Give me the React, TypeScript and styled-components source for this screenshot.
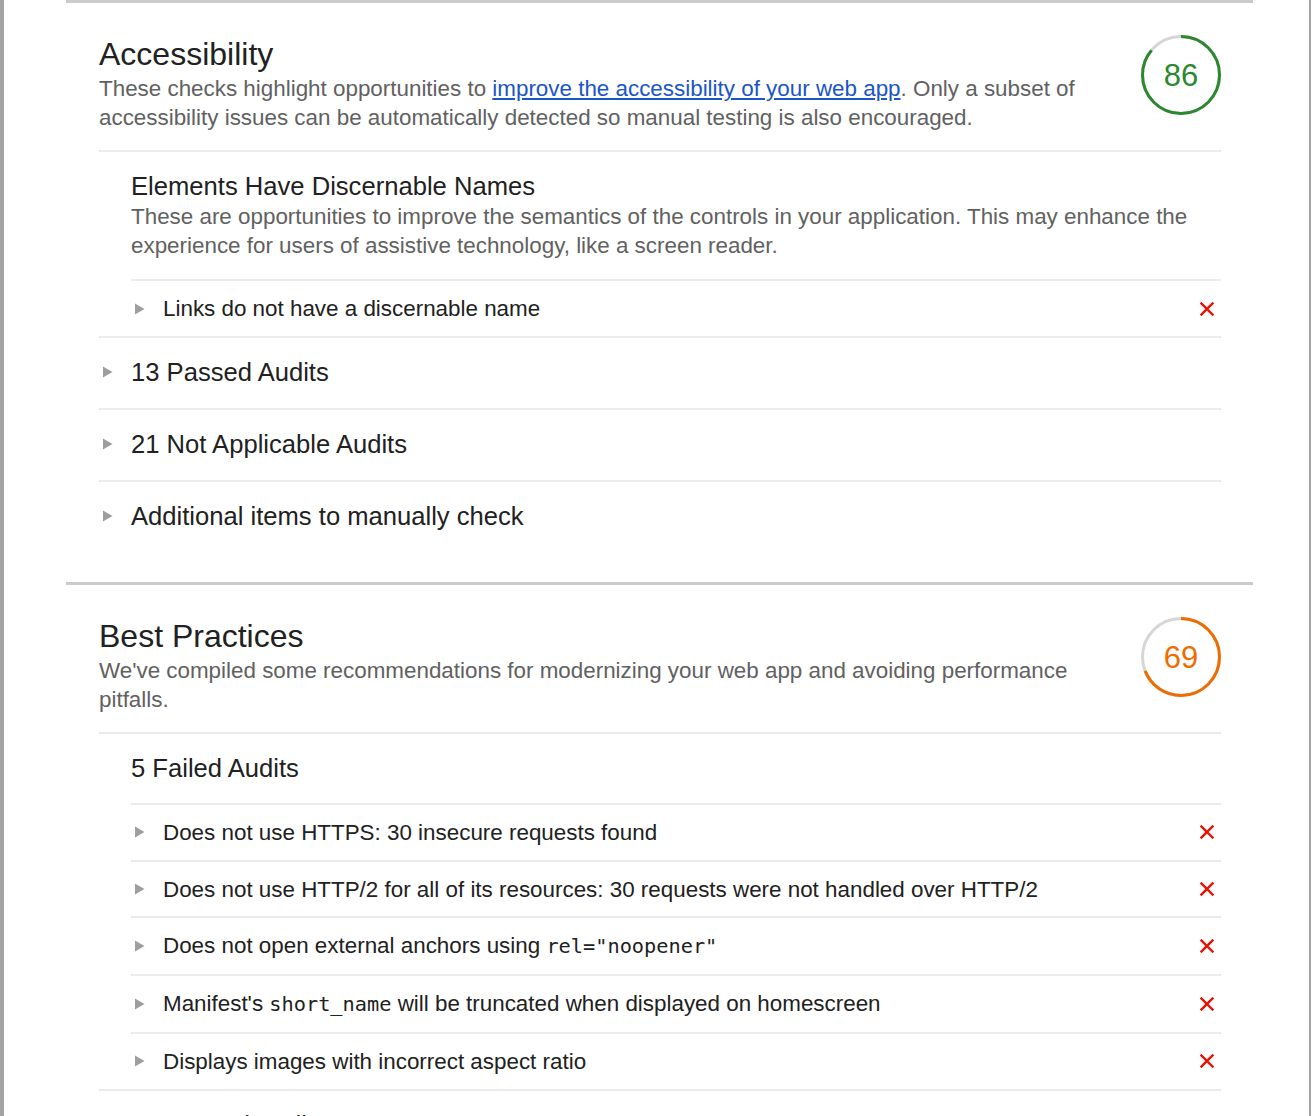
import React from "react";
import styled, { createGlobalStyle } from "styled-components";

const GlobalStyle = createGlobalStyle`
  html, body { margin: 0; padding: 0; background: #fff; }
  body {
    font-family: "Liberation Sans", Arial, Helvetica, sans-serif;
    color: #212121;
    -webkit-font-smoothing: antialiased;
  }
`;

const Frame = styled.div`
  box-sizing: border-box;
  width: 1311px;
  min-height: 1116px;
  border-left: 4px solid #a3a3a3;
  border-right: 2px solid #a3a3a3;
  overflow: hidden;
`;

const Column = styled.div`
  margin-left: 62px;
  width: 1187px;
`;

const Category = styled.section`
  border-top: 3px solid #cbcbcb;
  padding: 32px 32px 30px 33px;
`;

const Header = styled.header`
  display: flex;
  align-items: flex-start;
  padding-bottom: 18px;
`;

const HeaderText = styled.div`
  flex: 1;
  margin-right: 40px;
`;

const Title = styled.h2`
  margin: 0;
  font-size: 32px;
  line-height: 38px;
  font-weight: 400;
  color: #212121;
`;

const Description = styled.p`
  margin: 1px 0 0;
  font-size: 22.4px;
  line-height: 29px;
  color: #616161;
`;

const Link = styled.a`
  color: #1a55c9;
  text-decoration: underline;
`;

const GaugeWrap = styled.div<{ $color: string }>`
  position: relative;
  width: 80px;
  height: 80px;
  flex: none;
  color: ${(p) => p.$color};
`;

const GaugeValue = styled.div`
  position: absolute;
  inset: 0;
  display: flex;
  align-items: center;
  justify-content: center;
  font-size: 31px;
  line-height: 1;
  padding-top: 1px;
`;

const Group = styled.div`
  border-top: 2px solid #ebebeb;
`;

const GroupHeader = styled.div`
  padding: 18px 0 19px 32px;
`;

const GroupTitle = styled.div`
  font-size: 25.6px;
  line-height: 32px;
  color: #212121;
`;

const GroupDescription = styled.div`
  font-size: 22.4px;
  line-height: 29px;
  color: #616161;
`;

const AuditList = styled.div`
  margin-left: 32px;
`;

const AuditRow = styled.div`
  display: flex;
  align-items: center;
  border-top: 2px solid #ebebeb;
  padding: 13px 0 12.8px;
  font-size: 22.4px;
  line-height: 29px;
  color: #212121;
`;

const ArrowSlot = styled.span`
  width: 32px;
  flex: none;
  display: flex;
  align-items: center;
  padding-left: 4px;
  box-sizing: border-box;
`;

const AuditText = styled.span`
  flex: 1;
`;

const Code = styled.code`
  font-family: "DejaVu Sans Mono", "Liberation Mono", monospace;
  font-size: 20.3px;
`;

const FailMark = styled.span`
  flex: none;
  display: flex;
  margin-right: 7px;
`;

const ExpandRow = styled.div`
  display: flex;
  align-items: center;
  border-top: 2px solid #ebebeb;
  padding: 18px 0 20px;
  font-size: 25.6px;
  line-height: 32px;
  color: #212121;
`;

const Arrow = () => (
  <svg width="10" height="12" viewBox="0 0 10 12" aria-hidden>
    <polygon points="0,0.5 9.5,6 0,11.5" fill="#9e9e9e" />
  </svg>
);

const Cross = () => (
  <svg width="14" height="14" viewBox="0 0 14 14" aria-hidden>
    <path d="M1.5 1.5 L12.5 12.5 M12.5 1.5 L1.5 12.5" stroke="#eb0f00" strokeWidth="2.4" strokeLinecap="square" />
  </svg>
);

const Gauge = ({ value, color }: { value: number; color: string }) => {
  const r = 38.5;
  const c = 2 * Math.PI * r;
  return (
    <GaugeWrap $color={color}>
      <svg width="80" height="80" viewBox="0 0 80 80">
        <circle cx="40" cy="40" r={r} fill="none" stroke="#d6d6d6" strokeWidth="3" />
        <circle
          cx="40"
          cy="40"
          r={r}
          fill="none"
          stroke={color}
          strokeWidth="3"
          strokeDasharray={`${(c * value) / 100} ${c}`}
          transform="rotate(-90 40 40)"
        />
      </svg>
      <GaugeValue>{value}</GaugeValue>
    </GaugeWrap>
  );
};

const Audit = ({ children }: { children: React.ReactNode }) => (
  <AuditRow>
    <ArrowSlot>
      <Arrow />
    </ArrowSlot>
    <AuditText>{children}</AuditText>
    <FailMark>
      <Cross />
    </FailMark>
  </AuditRow>
);

const Expandable = ({ children }: { children: React.ReactNode }) => (
  <ExpandRow>
    <ArrowSlot>
      <Arrow />
    </ArrowSlot>
    <span>{children}</span>
  </ExpandRow>
);

export default function App() {
  return (
    <>
      <GlobalStyle />
      <Frame>
        <Column>
          <Category>
            <Header>
              <HeaderText>
                <Title>Accessibility</Title>
                <Description>
                  These checks highlight opportunities to{" "}
                  <Link href="#">improve the accessibility of your web app</Link>. Only a subset of
                  accessibility issues can be automatically detected so manual testing is also
                  encouraged.
                </Description>
              </HeaderText>
              <Gauge value={86} color="#2b882f" />
            </Header>
            <Group>
              <GroupHeader>
                <GroupTitle>Elements Have Discernable Names</GroupTitle>
                <GroupDescription>
                  These are opportunities to improve the semantics of the controls in your
                  application. This may enhance the experience for users of assistive technology,
                  like a screen reader.
                </GroupDescription>
              </GroupHeader>
              <AuditList>
                <Audit>Links do not have a discernable name</Audit>
              </AuditList>
            </Group>
            <Expandable>13 Passed Audits</Expandable>
            <Expandable>21 Not Applicable Audits</Expandable>
            <Expandable>Additional items to manually check</Expandable>
          </Category>
          <Category>
            <Header>
              <HeaderText>
                <Title>Best Practices</Title>
                <Description>
                  We've compiled some recommendations for modernizing your web app and avoiding
                  performance pitfalls.
                </Description>
              </HeaderText>
              <Gauge value={69} color="#ef6c00" />
            </Header>
            <Group>
              <GroupHeader>
                <GroupTitle>5 Failed Audits</GroupTitle>
              </GroupHeader>
              <AuditList>
                <Audit>Does not use HTTPS: 30 insecure requests found</Audit>
                <Audit>
                  Does not use HTTP/2 for all of its resources: 30 requests were not handled over
                  HTTP/2
                </Audit>
                <Audit>
                  Does not open external anchors using <Code>rel="noopener"</Code>
                </Audit>
                <Audit>
                  Manifest's <Code>short_name</Code> will be truncated when displayed on homescreen
                </Audit>
                <Audit>Displays images with incorrect aspect ratio</Audit>
              </AuditList>
            </Group>
            <Expandable>11 Passed Audits</Expandable>
          </Category>
        </Column>
      </Frame>
    </>
  );
}
